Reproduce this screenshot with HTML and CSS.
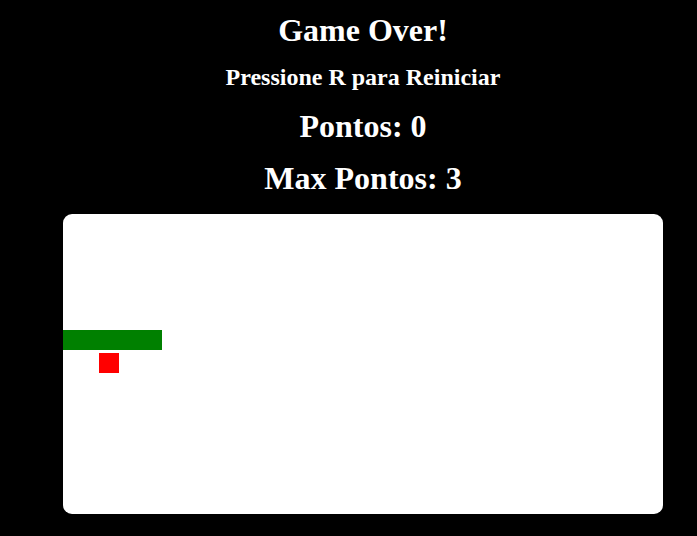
FILE: index.html
```html
<!DOCTYPE html>
<html lang="pt">
<head>
<meta charset="utf-8">
<title>Snake</title>
<link rel="stylesheet" href="styles.css">
</head>
<body>
<main class="game">
  <h1 class="title">Game Over!</h1>
  <h2 class="hint">Pressione R para Reiniciar</h2>
  <h1 class="score score-current">Pontos: 0</h1>
  <h1 class="score score-max">Max Pontos: 3</h1>
  <div class="board">
    <div class="snake"></div>
    <div class="food"></div>
  </div>
</main>
</body>
</html>
```
FILE: styles.css
```css
html, body {
  background: #000;
}
body {
  margin: 8px;
  color: #fff;
  font-family: "Liberation Serif", "Times New Roman", serif;
}
.game {
  width: 710px;
  display: flex;
  flex-direction: column;
  align-items: center;
}
.title {
  font-size: 32px;
  line-height: 36px;
  margin: 4px 0 0;
}
.hint {
  font-size: 24px;
  line-height: 28px;
  margin: 15px 0 0;
}
.score {
  font-size: 32px;
  line-height: 36px;
  margin: 0;
}
.score-current {
  margin-top: 17px;
}
.score-max {
  margin-top: 16px;
}
.board {
  position: relative;
  margin-top: 18px;
  width: 600px;
  height: 300px;
  background: #fff;
  border-radius: 9px;
  overflow: hidden;
}
.snake {
  position: absolute;
  left: 0;
  top: 116px;
  width: 99px;
  height: 20px;
  background: #008000;
}
.food {
  position: absolute;
  left: 36px;
  top: 139px;
  width: 20px;
  height: 20px;
  background: #f00;
}
```
